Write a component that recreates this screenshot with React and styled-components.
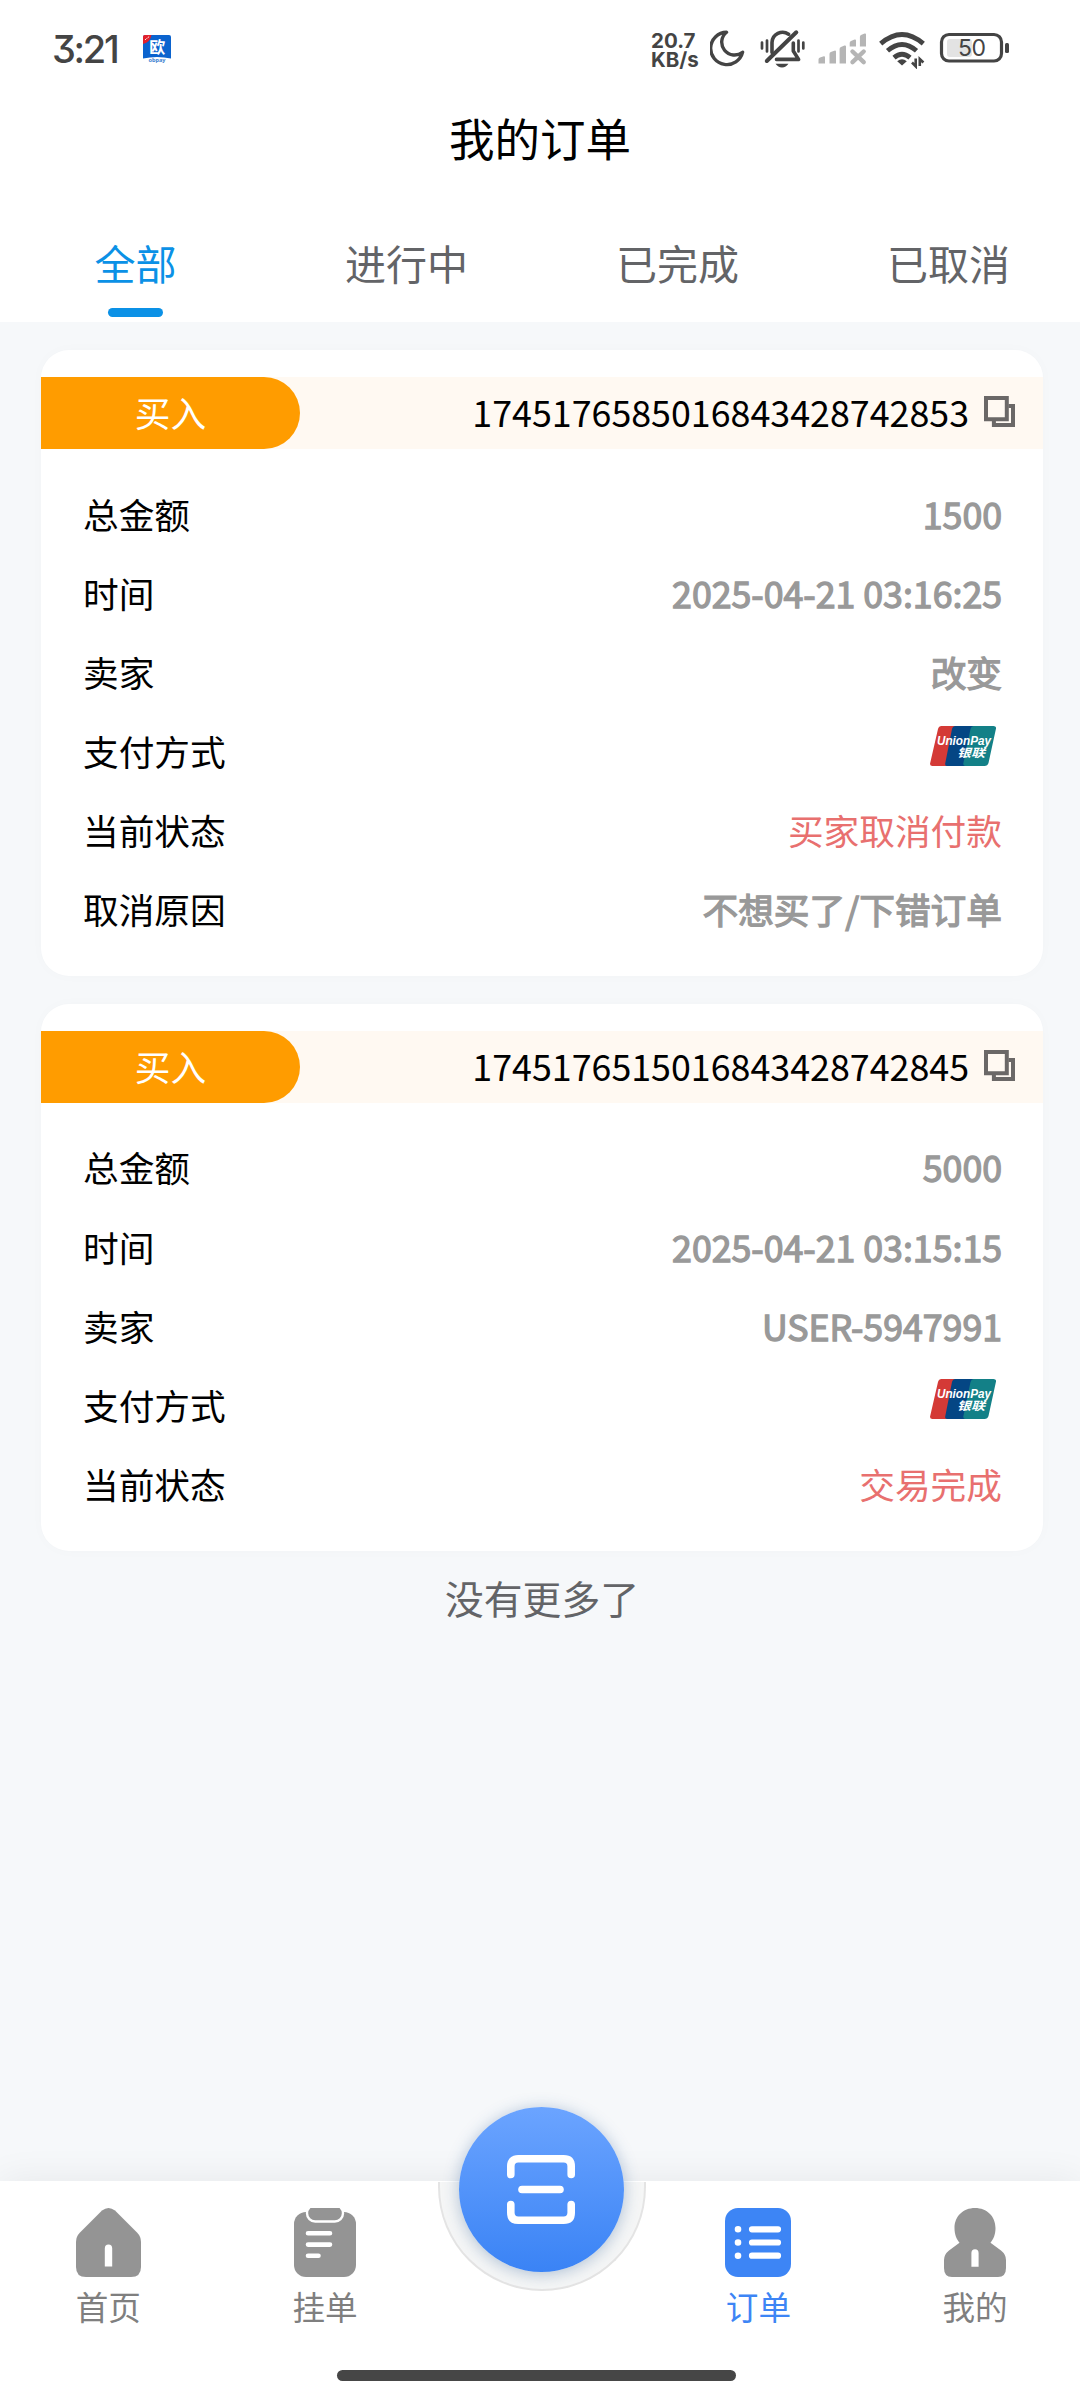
import styled, { createGlobalStyle, css } from "styled-components";

const Color = {
  page: "#f6f8fa",
  surface: "#ffffff",
  accent: "#0b91e6",
  primary: "#3d85f5",
  orange: "#ff9c00",
  strip: "#fff9f2",
  danger: "#e8706f",
  muted: "#999999",
  grey: "#636467",
  navIcon: "#949494",
  navText: "#7f7f7f",
  status: "#444444",
};

const tabs = ["全部", "进行中", "已完成", "已取消"];

const orders = [
  {
    id: "1745176585016843428742853",
    type: "买入",
    rows: [
      { label: "总金额", value: "1500" },
      { label: "时间", value: "2025-04-21 03:16:25" },
      { label: "卖家", value: "改变" },
      { label: "支付方式", pay: true },
      { label: "当前状态", value: "买家取消付款", danger: true },
      { label: "取消原因", value: "不想买了/下错订单" },
    ],
  },
  {
    id: "1745176515016843428742845",
    type: "买入",
    rows: [
      { label: "总金额", value: "5000" },
      { label: "时间", value: "2025-04-21 03:15:15" },
      { label: "卖家", value: "USER-5947991" },
      { label: "支付方式", pay: true },
      { label: "当前状态", value: "交易完成", danger: true },
    ],
  },
];

const AppBadge = () => (
  <svg width="28" height="28" viewBox="0 0 28 28">
    <path d="M2 0H26Q28 0 28 2V23.5Q14 20.5 0 23.5V2Q0 0 2 0Z" fill="#0b63ce" />
    <path d="M2 0H8.5Q7.5 7 0 9V2Q0 0 2 0Z" fill="#e3202b" />
    <path d="M2 5l1.6-1.6M4.5 3l1.6-1.4" stroke="#fff" strokeWidth="0.9" />
    <text x="14.2" y="17.6" textAnchor="middle" fontSize="16" fontWeight="700" fill="#fff" fontFamily="Noto Sans CJK SC, sans-serif">欧</text>
    <text x="14" y="27" textAnchor="middle" fontSize="5.6" fontWeight="700" fill="#3c7fd0" fontFamily="Noto Sans, sans-serif">obpay</text>
  </svg>
);

const StatusIcons = () => (
  <svg width="304" height="40" viewBox="0 0 304 40">
    {/* moon */}
    <path d="M16.5 3.2A16.2 16.2 0 1 0 32.6 23.2A12.6 12.6 0 0 1 16.5 3.2Z" fill="none" stroke="#444" strokeWidth="3.4" strokeLinejoin="round" />
    {/* muted bell */}
    <g stroke="#444" fill="none" strokeLinecap="round" strokeLinejoin="round">
      <path d="M62 23.5V13.5A10.6 10.6 0 0 1 78.6 5.2" strokeWidth="3.6" />
      <path d="M56.8 32L86.3 3.3" strokeWidth="4" />
      <path d="M83.3 14V22L88.6 30.4H66.5" strokeWidth="3.6" />
      <path d="M52 13.5V19.5M57 11.5V22.5M88.5 11.5V22.5M93.3 13.5V19.5" strokeWidth="2.7" />
    </g>
    <path d="M65.5 34.8H78.5Q76 38.4 72 38.4T65.5 34.8Z" fill="#444" />
    {/* cell signal */}
    <g fill="#b5b5b5">
      <path d="M108.5 34.4V30.5Q108.5 29 110 28.6L113.8 27.3Q115 27 115 28.4V34.4Z" />
      <path d="M119.5 34.4V25Q119.5 23.6 120.8 23.1L124.4 21.7Q126 21.3 126 22.8V34.4Z" />
      <path d="M129.6 34.4V20Q129.6 18.6 131 18.1L134.4 16.6Q136 16.2 136 17.6V34.4Z" />
      <path d="M139.7 17.5V14Q139.7 12.6 141 12L144.6 10.5Q146 10.1 146 11.6V17.5Z" />
      <path d="M149.9 17.5V8Q149.9 6.6 151 6L154.6 4.6Q156 4.2 156 5.6V17.5Z" />
    </g>
    <path d="M142.5 22.5L153.7 33.2M153.7 22.5L142.5 33.2" stroke="#b5b5b5" strokeWidth="4.4" strokeLinecap="round" />
    {/* wifi */}
    <g stroke="#444" fill="none" strokeWidth="4.8">
      <path d="M170.7 14.6Q192 -3.8 213.3 14.6" />
      <path d="M177.5 21.8Q192 9.2 206.5 21.8" />
      <path d="M184 28.6Q192 21.8 200 28.6" />
    </g>
    <path d="M187.2 32.2Q192 28.4 196.8 32.2L192 36.4Z" fill="#444" />
    <path d="M205.7 29.5V37.3L202 33.5M209.8 37V30L213.4 33.5" stroke="#444" strokeWidth="2.6" fill="none" />
    {/* battery */}
    <rect x="231.5" y="5.5" width="60" height="26.5" rx="7.5" fill="none" stroke="#444" strokeWidth="3.2" />
    <rect x="237" y="10" width="25" height="18" rx="3" fill="#e3e3e3" />
    <rect x="295" y="14" width="4" height="10" rx="1.5" fill="#444" />
    <text x="261.8" y="26.9" textAnchor="middle" fontSize="23" fill="#444" fontFamily="Inter, sans-serif" letterSpacing="-0.5">50</text>
  </svg>
);

const CopyIcon = () => (
  <svg width="31" height="31" viewBox="0 0 31 31" fill="none" stroke="#6b6867" strokeWidth="4">
    <path d="M2 2H22.8V23.2H2Z" />
    <path d="M24.5 9.9H29V29H9.9V25" />
  </svg>
);

const UnionPay = () => (
  <svg width="66" height="40" viewBox="0 0 66 40">
    <path d="M11.5 0H30L20 40H2.5Q-0.6 40 0.2 37L8 3Q8.8 0 11.5 0Z" fill="#d43a36" />
    <path d="M25.5 0H48L38 40H17.5Q14.5 40 15.3 37L22 3Q22.8 0 25.5 0Z" fill="#044684" />
    <path d="M43.5 0H63.5Q66.6 0 65.9 3L58.5 37Q57.6 40 54.5 40H35.5Q32.7 40 33.4 37L40.5 3Q41.3 0 43.5 0Z" fill="#138087" />
    <text x="7" y="18.8" fontSize="13.6" fontWeight="700" fontStyle="italic" fill="#fff" textLength="54" lengthAdjust="spacingAndGlyphs" fontFamily="Liberation Sans, sans-serif">UnionPay</text>
    <text x="27" y="30.5" fontSize="11.4" fontWeight="700" fontStyle="italic" fill="#fff" textLength="28" lengthAdjust="spacingAndGlyphs" fontFamily="Noto Sans CJK SC, sans-serif">银联</text>
  </svg>
);

const HomeIcon = () => (
  <svg width="65" height="69" viewBox="0 0 65 69">
    <path d="M26 2.5Q32.5 -2.5 39 2.5L61 24.5Q65 28.5 65 34V59Q65 69 55 69H10Q0 69 0 59V34Q0 28.5 4 24.5Z" fill={Color.navIcon} />
    <path d="M28.8 58.5V40.5Q28.8 36.6 32.5 36.6T36.2 40.5V58.5Z" fill="#fff" />
  </svg>
);

const ClipboardIcon = () => (
  <svg width="62" height="69" viewBox="0 0 62 69">
    <rect x="0" y="4" width="62" height="65" rx="12" fill={Color.navIcon} />
    <rect x="13" y="-3" width="36" height="16.5" rx="8.2" fill={Color.navIcon} stroke="#fff" strokeWidth="2.4" />
    {/* the clip stays open at the top edge */}
    <rect x="17" y="0" width="28" height="4" fill={Color.navIcon} />
    <path d="M14 25.3H36M14 36.6H36M14 47.8H24.5" stroke="#fff" strokeWidth="4.6" strokeLinecap="round" />
  </svg>
);

const OrderIcon = () => (
  <svg width="66" height="69" viewBox="0 0 66 69">
    <rect width="66" height="69" rx="13" fill={Color.primary} />
    <path d="M27 21.3H53M27 34.5H53M27 47.7H53" stroke="#fff" strokeWidth="6.2" strokeLinecap="round" />
    <path d="M13 21.3h0.01M13 34.5h0.01M13 47.7h0.01" stroke="#fff" strokeWidth="6.6" strokeLinecap="round" />
  </svg>
);

const UserIcon = () => (
  <svg width="62" height="69" viewBox="0 0 62 69">
    <path d="M31 0C43 0 51.5 8.5 51.5 20C51.5 26.5 49.5 31 46.5 34.8L57 42.5Q62 46.5 62 52V60Q62 69 54 69H8Q0 69 0 60V52Q0 46.5 5 42.5L15.5 34.8C12.5 31 10.5 26.5 10.5 20C10.5 8.5 19 0 31 0Z" fill={Color.navIcon} />
    <path d="M27.4 58.8V45Q27.4 41.2 31 41.2T34.6 45V58.8Z" fill="#fff" />
  </svg>
);

const ScanIcon = () => (
  <svg width="68" height="69" viewBox="0 0 68 69" fill="none" stroke="#fff" strokeWidth="7.6" strokeLinecap="round">
    <path d="M3.8 19.5V11.3Q3.8 3.8 11.3 3.8H56.7Q64.2 3.8 64.2 11.3V19.5" />
    <path d="M3.8 49.5V57.7Q3.8 65.2 11.3 65.2H56.7Q64.2 65.2 64.2 57.7V49.5" />
    <path d="M15 34.5H53" />
  </svg>
);

const OrderCard = ({ order }) => {
  return (
    <Card>
      <CardHeader>
        <TypePill>{order.type}</TypePill>
        <OrderId>{order.id}</OrderId>
        <CopyIcon />
      </CardHeader>
      <Rows>
        {order.rows.map((row) => (
          <Row key={row.label}>
            <span>{row.label}</span>
            {row.pay ? (
              <PayLogo>
                <UnionPay />
              </PayLogo>
            ) : (
              <Value $danger={row.danger}>{row.value}</Value>
            )}
          </Row>
        ))}
      </Rows>
    </Card>
  );
};

const App = () => {
  return (
    <>
      <GlobalStyle />
      <Page>
        <Header>
          <StatusBar>
            <Time>3:21</Time>
            <AppBadge />
            <NetSpeed>
              <span>20.7</span>
              <span>KB/s</span>
            </NetSpeed>
            <StatusIcons />
          </StatusBar>
          <Title>我的订单</Title>
          <TabBar>
            {tabs.map((tab, i) => (
              <Tab key={tab} $active={i === 0}>
                {tab}
                <TabLine $active={i === 0} />
              </Tab>
            ))}
          </TabBar>
        </Header>

        <OrderList>
          {orders.map((order) => (
            <OrderCard key={order.id} order={order} />
          ))}
          <NoMore>没有更多了</NoMore>
        </OrderList>

        <BottomNav>
          <NavItem>
            <HomeIcon />
            首页
          </NavItem>
          <NavItem>
            <ClipboardIcon />
            挂单
          </NavItem>
          <ScanSlot>
            <ScanRing />
            <ScanButton>
              <ScanIcon />
            </ScanButton>
          </ScanSlot>
          <NavItem $active>
            <OrderIcon />
            订单
          </NavItem>
          <NavItem>
            <UserIcon />
            我的
          </NavItem>
          <HomeBar />
        </BottomNav>
      </Page>
    </>
  );
};

const GlobalStyle = createGlobalStyle`
  * {
    box-sizing: border-box;
  }

  body {
    margin: 0;
    font-family: "Noto Sans CJK SC", sans-serif;
    background: ${Color.page};
  }

  svg {
    display: block;
    flex-shrink: 0;
  }
`;

const Page = styled.div`
  width: 1080px;
  height: 2400px;
  display: flex;
  flex-direction: column;
  overflow: hidden;
  background: ${Color.page};
`;

const Header = styled.header`
  height: 322px;
  background: ${Color.surface};
`;

const StatusBar = styled.div`
  height: 98px;
  display: flex;
  align-items: center;
  padding: 0 66px 0 52px;
  color: ${Color.status};
`;

const Time = styled.div`
  width: 91px;
  font-family: Inter, sans-serif;
  font-size: 38px;
  font-weight: 450;
  letter-spacing: -2.3px;
  font-feature-settings: "cv09";
`;

const NetSpeed = styled.div`
  display: flex;
  flex-direction: column;
  margin-left: auto;
  width: 59px;
  font-family: Inter, sans-serif;
  font-size: 20.5px;
  font-weight: 700;
  line-height: 19px;
  padding-top: 2px;
`;

const Title = styled.h1`
  height: 78px;
  margin: 0;
  font-size: 45.5px;
  font-weight: 400;
  line-height: 78px;
  text-align: center;
  color: #000;
`;

const TabBar = styled.nav`
  height: 146px;
  display: grid;
  grid-template-columns: repeat(4, 271px);
`;

const Tab = styled.div`
  display: flex;
  flex-direction: column;
  align-items: center;
  padding-top: 56px;
  font-size: 41px;
  line-height: 60px;
  color: ${({ $active }) => ($active ? Color.accent : Color.grey)};
`;

const TabLine = styled.i`
  width: 55px;
  height: 9px;
  margin-top: 16px;
  border-radius: 5px;
  background: ${({ $active }) => ($active ? Color.accent : "transparent")};
`;

const OrderList = styled.main`
  flex: 1;
  display: flex;
  flex-direction: column;
  gap: 27.4px;
  padding: 28px 37px 0 41px;
`;

const Card = styled.section`
  padding: 27.4px 0 25.3px;
  border-radius: 28px;
  background: ${Color.surface};
  box-shadow: 0 0 14px rgba(0, 0, 0, 0.02);
`;

const CardHeader = styled.div`
  height: 71.6px;
  display: flex;
  align-items: center;
  padding-right: 28px;
  background: ${Color.strip};

  svg {
    margin-bottom: 3px;
  }
`;

const TypePill = styled.div`
  width: 259px;
  height: 100%;
  border-radius: 0 36px 36px 0;
  background: ${Color.orange};
  color: #fff;
  font-size: 35.7px;
  line-height: 70px;
  text-align: center;
`;

const OrderId = styled.div`
  margin-left: auto;
  margin-right: 15px;
  font-size: 35.8px;
  line-height: 68px;
  padding-bottom: 4px;
  color: #000;
`;

const Rows = styled.div`
  padding: 27.5px 41px 0 42px;
`;

const Row = styled.div`
  height: 79.1px;
  display: flex;
  align-items: center;
  justify-content: space-between;
  font-size: 35.7px;
  line-height: 74px;
  padding-bottom: 4.6px;
  color: #000;
`;

const Value = styled.span`
  color: ${Color.muted};
  -webkit-text-stroke: 1.3px ${Color.muted};

  ${({ $danger }) =>
    $danger &&
    css`
      color: ${Color.danger};
      -webkit-text-stroke: 0;
    `}
`;

const PayLogo = styled.span`
  padding: 0 6px 11px 0;
`;

const NoMore = styled.p`
  margin: -8px 0 0;
  font-size: 38.8px;
  line-height: 54px;
  text-align: center;
  color: ${Color.grey};
`;

const BottomNav = styled.footer`
  position: relative;
  height: 219px;
  display: grid;
  grid-template-columns: repeat(5, 216.7px);
  background: ${Color.surface};
  box-shadow: 0 0 36px rgba(0, 0, 0, 0.07);
`;

const NavItem = styled.div`
  display: flex;
  flex-direction: column;
  align-items: center;
  gap: 5px;
  padding-top: 27px;
  font-size: 32.6px;
  line-height: 48px;
  color: ${({ $active }) => ($active ? Color.primary : Color.navText)};
`;

const ScanSlot = styled.div`
  position: relative;
  height: 120px;
`;

/* lower half of the ring that the scan button sits in */
const ScanRing = styled.div`
  position: absolute;
  top: 1px;
  left: 4.6px;
  width: 208px;
  height: 109px;
  border: 2px solid #e4e4e4;
  border-top: 0;
  border-radius: 0 0 104px 104px;
  background: #f5f6f6;
`;

const ScanButton = styled.div`
  position: absolute;
  top: -74px;
  left: 25.6px;
  width: 165px;
  height: 165px;
  display: flex;
  align-items: center;
  justify-content: center;
  border-radius: 50%;
  background: linear-gradient(#6ba4ff, #3a83f5);
  box-shadow: 0 2px 16px rgba(40, 90, 150, 0.35);
`;

const HomeBar = styled.div`
  position: absolute;
  bottom: 19px;
  left: 337px;
  width: 399px;
  height: 11px;
  border-radius: 6px;
  background: #464646;
`;

export default App;
